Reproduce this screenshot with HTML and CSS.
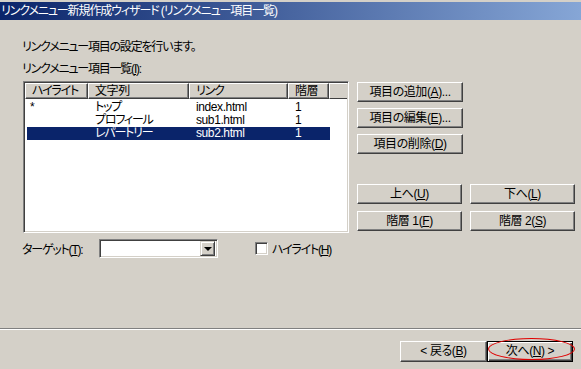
FILE: index.html
```html
<!DOCTYPE html>
<html lang="ja">
<head>
  <meta charset="UTF-8" />
  <title>リンクメニュー新規作成ウィザード</title>
  <link rel="stylesheet" href="styles.css">
</head>
<body>
  <div class="titlebar">リンクメニュー新規作成ウィザード (リンクメニュー項目一覧)</div>

  <div class="page">
    <p class="intro kana">リンクメニュー項目の設定を行います。</p>
    <p class="label kana">リンクメニュー項目一覧(<u>I</u>):</p>

    <div class="main">
      <div class="list">
        <div class="list-head">
          <div class="head-cell w1 kana">ハイライト</div>
          <div class="head-cell w2">文字列</div>
          <div class="head-cell w3 kana">リンク</div>
          <div class="head-cell w4">階層</div>
          <div class="head-fill"></div>
        </div>
        <div class="rows">
          <div class="row">
            <span class="first">*</span><span class="kana">トップ</span><span>index.html</span><span>1</span>
          </div>
          <div class="row">
            <span class="first"></span><span class="kana">プロフィール</span><span>sub1.html</span><span>1</span>
          </div>
          <div class="row selected">
            <span class="first"></span><span class="kana">レパートリー</span><span>sub2.html</span><span>1</span>
          </div>
        </div>
      </div>

      <div class="side">
        <div class="btn wide">項目の追加(<u>A</u>)...</div>
        <div class="btn wide">項目の編集(<u>E</u>)...</div>
        <div class="btn wide">項目の削除(<u>D</u>)</div>
        <div class="btn-grid">
          <div class="btn">上へ(<u>U</u>)</div>
          <div class="btn">下へ(<u>L</u>)</div>
          <div class="btn">階層 1(<u>F</u>)</div>
          <div class="btn">階層 2(<u>S</u>)</div>
        </div>
      </div>
    </div>

    <div class="options">
      <span class="target-label kana">ターゲット(<u>T</u>):</span>
      <div class="combo">
        <div class="combo-field"></div>
        <div class="combo-btn"><span class="arrow"></span></div>
      </div>
      <span class="checkbox"></span>
      <span class="check-label kana">ハイライト(<u>H</u>)</span>
    </div>
  </div>

  <div class="footer">
    <div class="separator"></div>
    <div class="nav">
      <div class="btn nav-btn">&lt; 戻る(<u>B</u>)</div>
      <div class="next-wrap">
        <div class="btn nav-btn default">次へ(<u>N</u>) &gt;</div>
        <div class="mark"></div>
      </div>
    </div>
  </div>
</body>
</html>
```

FILE: styles.css
```css
body {
  margin: 0;
  width: 581px;
  height: 369px;
  overflow: hidden;
  background-color: #d4d0c8;
  color: #000;
  font-family: "Liberation Sans", "Noto Sans CJK JP", sans-serif;
  font-size: 12px;
  letter-spacing: -0.4px;
  font-feature-settings: "palt";
}

/* katakana in the old UI font are narrow */
.kana {
  letter-spacing: -1.2px;
}

u {
  text-decoration: underline;
  text-underline-offset: 1px;
}

.titlebar {
  margin-top: 2px;
  height: 18px;
  line-height: 18px;
  padding-left: 1px;
  color: #fff;
  letter-spacing: -1.1px;
  background: linear-gradient(to right, #0a246a, #86a6d6);
  white-space: nowrap;
}

.page {
  height: 308px;
  padding: 20px 0 0 22px;
  box-sizing: border-box;
}

.intro,
.label {
  margin: 0;
  line-height: 14px;
}

.label {
  margin-top: 8px;
}

.main {
  display: flex;
  margin-top: 5px;
}

/* list view */
.list {
  width: 326px;
  height: 152px;
  margin-left: 1px;
  box-sizing: border-box;
  background-color: #fff;
  border: 1px solid;
  border-color: #808080 #fff #fff #808080;
  box-shadow: inset 1px 1px #404040, inset -1px -1px #d4d0c8;
  padding: 1px;
}

.list-head {
  display: flex;
  height: 16px;
  background-color: #d4d0c8;
}

.head-cell {
  box-sizing: border-box;
  height: 16px;
  line-height: 14px;
  padding-left: 6px;
  border-top: 1px solid #fff;
  border-left: 1px solid #fff;
  border-right: 1px solid #404040;
  border-bottom: 1px solid #404040;
  box-shadow: inset -1px -1px #808080;
  white-space: nowrap;
}

.w1 { width: 63px; }
.w2 { width: 101px; }
.w3 { width: 99px; }
.w4 { width: 41px; }

.head-fill {
  flex: 1;
  border-top: 1px solid #fff;
  border-left: 1px solid #fff;
  border-bottom: 1px solid #404040;
}

.rows {
  padding: 2px 0 0 2px;
}

.row {
  display: grid;
  grid-template-columns: 61px 101px 99px 42px;
  width: 303px;
  height: 13px;
  line-height: 13px;
  white-space: nowrap;
}

.row span {
  padding-left: 7px;
}

.row span.first {
  padding-left: 3px;
}

.row.selected {
  background-color: #0a246a;
  color: #fff;
}

/* buttons */
.btn {
  box-sizing: border-box;
  height: 20px;
  line-height: 18px;
  text-align: center;
  background-color: #d4d0c8;
  border: 1px solid;
  border-color: #fff #404040 #404040 #fff;
  box-shadow: inset -1px -1px #808080;
  white-space: nowrap;
}

.side {
  display: flex;
  flex-direction: column;
  gap: 6px;
  margin-left: 8px;
  padding-top: 1px;
}

.btn.wide {
  width: 106px;
}

.btn-grid {
  display: grid;
  grid-template-columns: 105px 105px;
  column-gap: 8px;
  row-gap: 7px;
  margin-top: 24px;
}

/* options row */
.options {
  display: flex;
  align-items: center;
  height: 19px;
  margin-top: 6px;
}

.target-label {
  width: 77px;
}

.combo {
  display: flex;
  width: 119px;
  height: 19px;
  box-sizing: border-box;
  background-color: #fff;
  border: 1px solid;
  border-color: #808080 #fff #fff #808080;
  box-shadow: inset 1px 1px #404040, inset -1px -1px #d4d0c8;
  padding: 2px;
}

.combo-field {
  flex: 1;
}

.combo-btn {
  box-sizing: border-box;
  width: 15px;
  height: 15px;
  margin-top: -1px;
  background-color: #d4d0c8;
  border: 1px solid;
  border-color: #d4d0c8 #404040 #404040 #d4d0c8;
  box-shadow: inset 1px 1px #fff, inset -1px -1px #808080;
  display: flex;
  align-items: center;
  justify-content: center;
}

.arrow {
  width: 0;
  height: 0;
  border-left: 4px solid transparent;
  border-right: 4px solid transparent;
  border-top: 4px solid #000;
  margin-top: 1px;
}

.checkbox {
  width: 13px;
  height: 13px;
  box-sizing: border-box;
  margin-left: 37px;
  background-color: #fff;
  border: 1px solid;
  border-color: #808080 #fff #fff #808080;
  box-shadow: inset 1px 1px #404040, inset -1px -1px #d4d0c8;
}

.check-label {
  margin-left: 4px;
}

/* footer */
.separator {
  height: 0;
  border-top: 1px solid #808080;
  border-bottom: 1px solid #fff;
}

.nav {
  display: flex;
  justify-content: flex-end;
  padding-right: 8px;
  margin-top: 11px;
}

.nav-btn {
  width: 87px;
  height: 21px;
  line-height: 19px;
}

.next-wrap {
  position: relative;
}

.btn.default {
  width: 86px;
  border: 1px solid #000;
  box-shadow: inset 1px 1px #fff, inset -1px -1px #404040, inset -2px -2px #808080;
}

.mark {
  position: absolute;
  left: 1px;
  top: -3px;
  width: 87px;
  height: 22px;
  box-sizing: border-box;
  border: 1px solid #e00000;
  border-radius: 50%;
}
```
